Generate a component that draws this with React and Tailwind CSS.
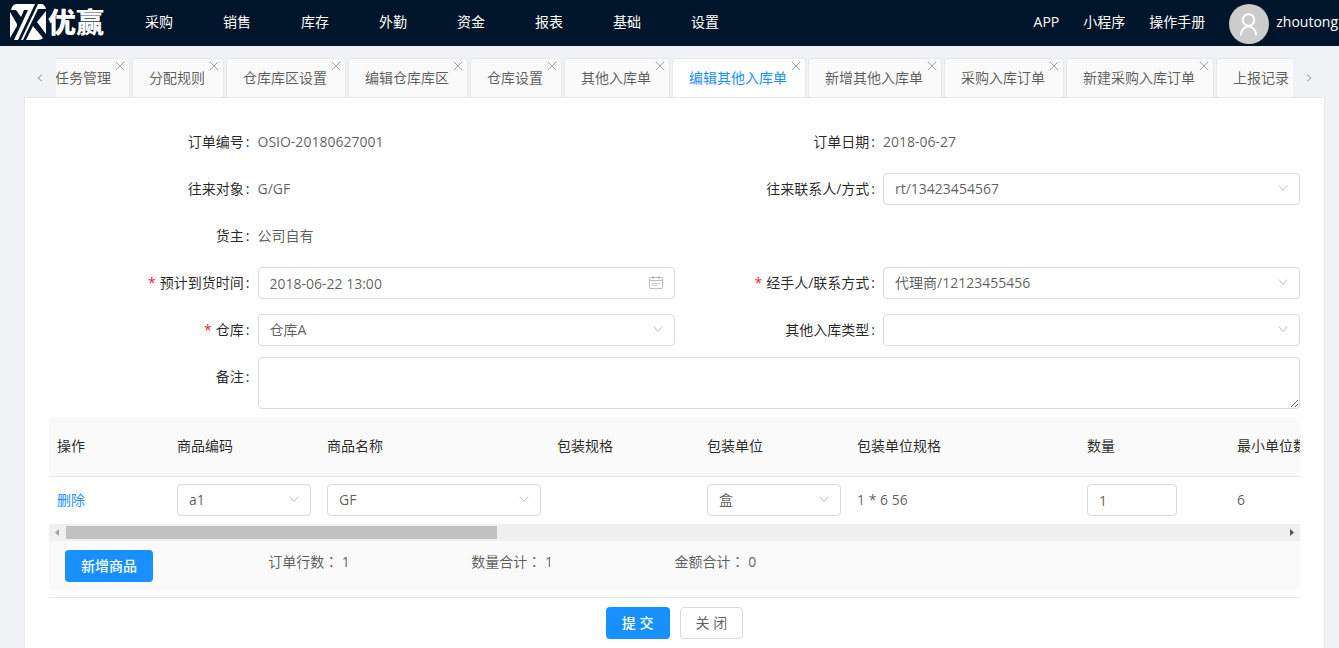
import React, { useState } from "react";

const navItems = ["采购", "销售", "库存", "外勤", "资金", "报表", "基础", "设置"];

const initialTabs = [
  "任务管理",
  "分配规则",
  "仓库库区设置",
  "编辑仓库库区",
  "仓库设置",
  "其他入库单",
  "编辑其他入库单",
  "新增其他入库单",
  "采购入库订单",
  "新建采购入库订单",
  "上报记录",
];

const columns = [
  { title: "操作", width: "w-[120px]" },
  { title: "商品编码", width: "w-[150px]" },
  { title: "商品名称", width: "w-[230px]" },
  { title: "包装规格", width: "w-[150px]" },
  { title: "包装单位", width: "w-[150px]" },
  { title: "包装单位规格", width: "w-[230px]" },
  { title: "数量", width: "w-[150px]" },
  { title: "最小单位数量", width: "w-auto" },
];

const totals = [
  { label: "订单行数", value: 1 },
  { label: "数量合计", value: 1 },
  { label: "金额合计", value: 0 },
];

const controlClass =
  "block h-8 w-full rounded border border-[#d9d9d9] bg-white px-[11px] text-sm text-black/65 outline-none focus:border-[#40a9ff]";

const Chevron = ({ className, d = "M1 3l5 6 5-6" }) => (
  <svg viewBox="0 0 12 12" className={className} fill="none" stroke="currentColor" aria-hidden="true">
    <path d={d} />
  </svg>
);

const Logo = () => (
  <a href="#" className="flex items-center gap-0.5 text-white">
    <svg viewBox="0 0 36 36" className="h-9 w-9" fill="currentColor" aria-hidden="true">
      <path d="M6 0H25L8 36H4L18 6H14L11 13L6 6H1Q2 1 6 0Z" />
      <path d="M0 8L7 20V22L0 34Z" />
      <path d="M28 0H32Q35 1 36 5H28L13 36H11Z" />
      <path d="M36 7V30L27 18Z" />
      <path d="M23 22L33 34Q31 36 28 36H16Z" />
    </svg>
    <span className="text-[28px] leading-9 font-black">优赢</span>
  </a>
);

const Header = () => (
  <header className="flex h-[46px] items-center bg-[#001529] pb-0.5 pl-2.5 text-white">
    <Logo />
    <nav className="ml-[41px] flex gap-[50px]">
      {navItems.map((item) => (
        <a key={item} href="#" className="hover:text-[#40a9ff]">
          {item}
        </a>
      ))}
    </nav>
    <div className="ml-auto flex items-center pr-px">
      <nav className="mr-6 flex gap-6">
        <a href="#">APP</a>
        <a href="#">小程序</a>
        <a href="#">操作手册</a>
      </nav>
      <span className="mt-1 mr-[7px] flex h-10 w-10 items-center justify-center rounded-full bg-[#ccc]">
        <svg viewBox="0 0 24 24" className="h-6 w-6" fill="none" stroke="currentColor" strokeWidth="2" aria-hidden="true">
          <circle cx="11.500" cy="8" r="5.800" />
          <path d="M4 23.500v-1a7.500 8 0 0 1 15 0v1" />
        </svg>
      </span>
      <span>zhoutong</span>
    </div>
  </header>
);

const TabBar = ({ active, onChange }) => (
  <div className="flex">
    <button type="button" aria-label="向左" className="flex w-8 shrink-0 items-center justify-center text-black/60">
      <Chevron className="h-2 w-2" d="M9 1L3 6l6 5" />
    </button>
    <div className="min-w-0 flex-1 overflow-hidden">
      <ul className="-ml-[18px] flex gap-0.5">
        {initialTabs.map((tab) => (
          <li
            key={tab}
            className={`relative shrink-0 rounded-t border border-b-0 border-[#e8e8e8] ${
              tab === active ? "bg-white text-[#1890ff]" : "bg-[#fafafa] text-black/65"
            }`}
          >
            <button type="button" onClick={() => onChange(tab)} className="h-[38px] pr-[18px] pl-4">
              {tab}
            </button>
            <button type="button" aria-label="关闭标签" className="absolute top-0.5 right-1 text-black/45">
              <Chevron className="h-2.5 w-2.5" d="M1 1l10 10M11 1L1 11" />
            </button>
          </li>
        ))}
      </ul>
    </div>
    <button type="button" aria-label="向右" className="flex w-8 shrink-0 items-center justify-center text-black/60">
      <Chevron className="h-2 w-2" d="M3 1l6 5-6 5" />
    </button>
  </div>
);

const SelectBox = ({ id, label, value }) => (
  <div className="relative">
    <select id={id} aria-label={label} defaultValue={value} className={`${controlClass} appearance-none`}>
      <option>{value}</option>
    </select>
    <Chevron className="pointer-events-none absolute top-2.5 right-3 h-2.5 w-2.5 text-black/30" />
  </div>
);

const FieldLabel = ({ htmlFor, required, children }) => (
  <label htmlFor={htmlFor} className="pr-2 text-right leading-8 text-black/85">
    {required && <span className="mr-1 text-[#f5222d]">*</span>}
    {children}
    <span className="ml-0.5">:</span>
  </label>
);

const Field = ({ id, label, required, className = "", children }) => (
  <div className={`grid grid-cols-3 ${className}`}>
    <FieldLabel htmlFor={id} required={required}>
      {label}
    </FieldLabel>
    <div className="col-span-2 leading-8">{children}</div>
  </div>
);

const OrderForm = () => (
  <>
    <div className="grid grid-cols-2 gap-y-[15px]">
      <Field id="orderNo" label="订单编号">
        <output id="orderNo">OSIO-20180627001</output>
      </Field>
      <Field id="orderDate" label="订单日期">
        <output id="orderDate">2018-06-27</output>
      </Field>
      <Field id="partner" label="往来对象">
        <output id="partner">G/GF</output>
      </Field>
      <Field id="contact" label="往来联系人/方式">
        <SelectBox id="contact" value="rt/13423454567" />
      </Field>
      <Field id="owner" label="货主" className="col-span-2 w-1/2">
        <output id="owner">公司自有</output>
      </Field>
      <Field id="arrival" label="预计到货时间" required>
        <div className="relative">
          <input id="arrival" type="text" defaultValue="2018-06-22 13:00" className={controlClass} />
          <svg
            viewBox="0 0 14 14"
            className="pointer-events-none absolute top-2 right-3 h-3.5 w-3.5 text-black/25"
            fill="none"
            stroke="currentColor"
            aria-hidden="true"
          >
            <rect x="0.5" y="2.5" width="13" height="11" rx="1" />
            <path d="M1 5.500h12M4 1v3M10 1v3M3 8.500h2M6 8.500h2M9 8.500h2M3 10.500h2M6 10.500h2" />
          </svg>
        </div>
      </Field>
      <Field id="handler" label="经手人/联系方式" required>
        <SelectBox id="handler" value="代理商/12123455456" />
      </Field>
      <Field id="warehouse" label="仓库" required>
        <SelectBox id="warehouse" value="仓库A" />
      </Field>
      <Field id="stockType" label="其他入库类型">
        <SelectBox id="stockType" value="" />
      </Field>
    </div>
    <div className="mt-[11px] grid grid-cols-6">
      <div className="flex flex-col pt-1">
        <FieldLabel htmlFor="remark">备注</FieldLabel>
      </div>
      <textarea
        id="remark"
        className="col-span-5 block h-[52px] w-full rounded border border-[#d9d9d9] px-[11px] py-1 outline-none focus:border-[#40a9ff]"
      />
    </div>
  </>
);

const GoodsTable = () => (
  <div className="mt-2 overflow-hidden rounded">
    <div className="overflow-hidden">
      <table className="w-[3530px] table-fixed text-left">
        <thead className="bg-[#fafafa] text-black/85">
          <tr className="h-[59px] border-b border-[#e8e8e8]">
            {columns.map(({ title, width }) => (
              <th key={title} className={`${width} px-2 font-normal`}>
                {title}
              </th>
            ))}
          </tr>
        </thead>
        <tbody>
          <tr className="h-12">
            <td className="px-2">
              <a href="#" className="text-[#1890ff]">
                删除
              </a>
            </td>
            <td className="px-2">
              <SelectBox label="商品编码" value="a1" />
            </td>
            <td className="px-2">
              <SelectBox label="商品名称" value="GF" />
            </td>
            <td className="px-2" />
            <td className="px-2">
              <SelectBox label="包装单位" value="盒" />
            </td>
            <td className="px-2">1 * 6 56</td>
            <td className="px-2">
              <div className="w-[90px]">
                <input type="text" aria-label="数量" defaultValue="1" className={controlClass} />
              </div>
            </td>
            <td className="px-2">6</td>
          </tr>
        </tbody>
      </table>
    </div>
    {/* horizontal scrollbar */}
    <div className="flex h-[17px] items-center bg-[#f0f0f0]">
      <svg viewBox="0 0 17 17" className="w-[17px]" aria-hidden="true">
        <path d="M10 5v7L6 8.500z" fill="#a3a3a3" />
      </svg>
      <div className="flex-1">
        <div className="h-[13px] w-[35.4%] bg-[#c1c1c1]" />
      </div>
      <svg viewBox="0 0 17 17" className="w-[17px]" aria-hidden="true">
        <path d="M7 5v7l4-3.500z" fill="#505050" />
      </svg>
    </div>
    <div className="grid grid-cols-6 bg-[#fafafa] px-4 pt-[9px] pb-2">
      <div>
        <button type="button" className="h-8 rounded bg-[#1890ff] px-4 font-medium text-white hover:bg-[#40a9ff]">
          新增商品
        </button>
      </div>
      {totals.map(({ label, value }) => (
        <span key={label} className="leading-[22px]">
          {label}
          <span className="font-['Noto_Sans_CJK_TC',sans-serif]">：</span> {value}
        </span>
      ))}
    </div>
  </div>
);

const App = () => {
  const [activeTab, setActiveTab] = useState("编辑其他入库单");

  return (
    <div className="flex min-h-screen flex-col bg-[#f0f2f5] font-['Open_Sans','Noto_Sans_CJK_SC',sans-serif] text-sm text-black/65">
      <Header />
      <main className="mt-3 mr-3.5 ml-6 flex flex-1 flex-col">
        <TabBar active={activeTab} onChange={setActiveTab} />
        <section className="flex-1 border border-b-0 border-[#e8e8e8] bg-white px-6 pt-7">
          <OrderForm />
          <GoodsTable />
          <div className="mt-[7px] flex justify-center gap-2.5 border-t border-[#e8e8e8] py-[9px]">
            <button type="button" className="h-8 rounded bg-[#1890ff] px-4 font-medium text-white hover:bg-[#40a9ff]">
              提 交
            </button>
            <button type="button" className="h-8 rounded border border-[#d9d9d9] bg-white px-[15px] hover:text-[#40a9ff]">
              关 闭
            </button>
          </div>
        </section>
      </main>
    </div>
  );
};

export default App;
